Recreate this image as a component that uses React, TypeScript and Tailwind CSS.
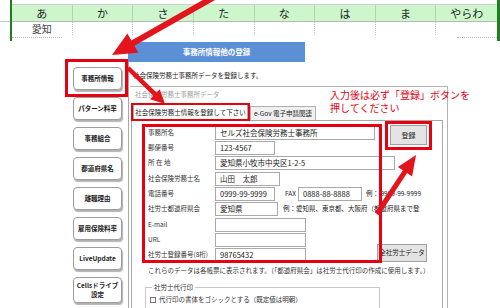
import React from 'react';

const KANA = ['あ', 'か', 'さ', 'た', 'な', 'は', 'ま', 'やらわ'];

const MENU = [
  '事務所情報',
  'パターン料率',
  '事務組合',
  '都道府県名',
  '離職理由',
  '雇用保険料率',
  'LiveUpdate',
];

// arrow polygon from tail to tip
const arrowPoints = (x1: number, y1: number, x2: number, y2: number, sw: number, hw: number, hl: number) => {
  const dx = x2 - x1;
  const dy = y2 - y1;
  const len = Math.hypot(dx, dy);
  const ux = dx / len;
  const uy = dy / len;
  const px = -uy;
  const py = ux;
  const bx = x2 - ux * hl;
  const by = y2 - uy * hl;
  const pts = [
    [x1 + (px * sw) / 2, y1 + (py * sw) / 2],
    [bx + (px * sw) / 2, by + (py * sw) / 2],
    [bx + (px * hw) / 2, by + (py * hw) / 2],
    [x2, y2],
    [bx - (px * hw) / 2, by - (py * hw) / 2],
    [bx - (px * sw) / 2, by - (py * sw) / 2],
    [x1 - (px * sw) / 2, y1 - (py * sw) / 2],
  ];
  return pts.map((p) => p.map((n) => n.toFixed(1)).join(',')).join(' ');
};

const Field: React.FC<{ w: string; value?: string }> = ({ w, value }) => (
  <div
    className={`${w} h-[14px] shrink-0 border border-[#a9a9a9] bg-white pl-[4px] text-[7.5px] leading-[12px] text-[#222] whitespace-nowrap overflow-hidden`}
  >
    {value}
  </div>
);

const Row: React.FC<{ label: string; h: string; children: React.ReactNode }> = ({ label, h, children }) => (
  <div className={`flex items-center ${h}`}>
    <span className="w-[67px] shrink-0 text-[6.5px] text-[#333] whitespace-nowrap">{label}</span>
    {children}
  </div>
);

const App: React.FC = () => {
  return (
    <div className="relative w-[500px] h-[308px] overflow-hidden bg-white font-['Noto_Sans_CJK_JP',sans-serif] text-[#222]">
      {/* sheet strip */}
      <div className="flex h-[41px]">
        <div className="w-[10px] shrink-0">
          <div className="h-[22px] border-b border-[#c8c8c8]" />
        </div>
        <div className="flex-1 border-l-[2px] border-r-[3px] border-[#1d7f1d]">
          <div className="h-[5px] border-b border-[#cfcfcf]" />
          <div className="grid grid-cols-8 h-[17px] bg-[#cdf6cd] border-b border-[#b9b9b9]">
            {KANA.map((k) => (
              <div
                key={k}
                className="flex items-center justify-center border-r border-[#b9cfb9] text-[11px] leading-none last:border-r-0"
              >
                {k}
              </div>
            ))}
          </div>
          <div className="grid grid-cols-8 h-[13px]">
            {KANA.map((k, i) => (
              <div
                key={k}
                className="w-full text-center border-r border-dotted border-[#c4c4c4] text-[10px] leading-[13px] text-[#444] last:border-r-0"
              >
                {i === 0 ? '愛知' : ''}
              </div>
            ))}
          </div>
          <div className="flex justify-between h-[3px]">
            <div className="w-[50px] border-b border-dotted border-[#b5b5b5]" />
            <div className="w-[40px] border-b border-dotted border-[#b5b5b5]" />
          </div>
        </div>
      </div>

      <div className="flex">
        {/* side menu */}
        <div className="w-[128px] shrink-0 flex flex-col items-end pr-[6px] pt-[26px] gap-[7px]">
          {MENU.map((m) => (
            <button
              key={m}
              className="w-[49px] h-[23px] rounded-[4px] border border-[#9d9d9d] bg-white shadow-[1px_2px_1px_rgba(0,0,0,0.3)] text-[6.5px] font-bold leading-none text-[#222] flex items-center justify-center whitespace-nowrap"
            >
              {m}
            </button>
          ))}
          <button className="w-[49px] h-[26px] rounded-[4px] border border-[#9d9d9d] bg-white shadow-[1px_2px_1px_rgba(0,0,0,0.3)] text-[6.5px] font-bold leading-[9px] text-[#222] flex flex-col items-center justify-center">
            <span>Cellsドライブ</span>
            <span>設定</span>
          </button>
        </div>

        {/* main */}
        <div className="flex-1 flex flex-col">
          <div className="mt-[1px] w-[177px] h-[20px] bg-[#5b8fd6] flex items-center justify-center text-[7.5px] font-bold text-white">
            事務所情報他の登録
          </div>
          <div className="border-l border-[#a8a8a8] h-[260px]">
            <div className="pt-[8px] pl-[4px] text-[6.5px] leading-[10px] text-[#222]">
              社会保険労務士事務所データを登録します。
            </div>
            <div className="mt-[6px] ml-[1px] w-[318px] h-[240px] border-t border-r border-[#b4b4b4]">
              <div className="pt-[3px] pl-[5px] text-[6.5px] leading-[9px] text-[#a0a0a0]">
                社会保険労務士事務所データ
              </div>
              {/* tabs */}
              <div className="mt-[4px] flex items-end h-[17px]">
                <div className="relative ml-[3px] w-[115px] h-[17px] -mb-px border border-b-0 border-[#a8a8a8] bg-white flex items-center justify-center text-[6.5px] whitespace-nowrap">
                  社会保険労務士情報を登録して下さい
                </div>
                <div className="ml-[2px] w-[66px] h-[14px] border border-b-0 border-[#b0b0b0] bg-[#f0f0f0] flex items-center justify-center text-[6.5px] whitespace-nowrap">
                  e-Gov 電子申請関連
                </div>
              </div>
              <div className="ml-[1px] w-[312px] h-[220px] border border-[#a8a8a8] bg-white pl-[16px] pt-[3px]">
                <Row label="事務所名" h="h-[17px]">
                  <Field w="w-[160px]" value="セルズ社会保険労務士事務所" />
                  <button className="self-start mt-[1px] ml-[15px] w-[37px] h-[20px] shrink-0 border border-[#a0a0a0] bg-[#e4e4e4] text-[7px] text-[#222]">
                    登録
                  </button>
                </Row>
                <Row label="郵便番号" h="h-[14px]">
                  <Field w="w-[60px]" value="123-4567" />
                </Row>
                <Row label="所 在 地" h="h-[16px]">
                  <Field w="w-[180px]" value="愛知県小牧市中央区1-2-5" />
                </Row>
                <Row label="社会保険労務士名" h="h-[15px]">
                  <Field w="w-[65px]" value="山田　太郎" />
                </Row>
                <Row label="電話番号" h="h-[15px]">
                  <Field w="w-[60px]" value="0999-99-9999" />
                  <span className="ml-[10px] w-[13px] shrink-0 text-[6.5px]">FAX</span>
                  <Field w="w-[64px]" value="0888-88-8888" />
                  <span className="ml-[4px] text-[6.5px] whitespace-nowrap">例：&nbsp;9999-99-9999</span>
                </Row>
                <Row label="社労士都道府県会" h="h-[16px]">
                  <Field w="w-[63px]" value="愛知県" />
                  <span className="ml-[5px] text-[6.5px] whitespace-nowrap">例：愛知県、東京都、大阪府（都道府県まで登</span>
                </Row>
                <Row label="E-mail" h="h-[15px]">
                  <Field w="w-[91px]" />
                </Row>
                <Row label="URL" h="h-[15px]">
                  <Field w="w-[91px]" />
                </Row>
                <Row label="社労士登録番号(8桁)" h="h-[15px]">
                  <Field w="w-[91px]" value="98765432" />
                  <button className="self-end ml-auto mr-[15px] w-[50px] h-[18px] shrink-0 border border-[#a0a0a0] bg-[#e4e4e4] text-[6.5px] text-[#222] whitespace-nowrap">
                    全社労士データ
                  </button>
                </Row>
                <div className="mt-[4px] text-[6.5px] leading-[9px] text-[#333] whitespace-nowrap">
                  これらのデータは各帳票に表示されます。（「都道府県会」は社労士代行印の作成に使用します。）
                </div>
                <fieldset className="mt-[8px] -ml-[3px] w-[235px] h-[40px] border border-[#c8c8c8] pl-[4px]">
                  <legend className="ml-[2px] px-[2px] text-[6.5px] leading-[9px] text-[#333]">社労士代行印</legend>
                  <div className="flex items-center gap-[3px] pt-[3px]">
                    <span className="w-[6px] h-[6px] border border-[#777] bg-white" />
                    <span className="text-[6.5px] leading-[9px] text-[#333]">代行印の書体をゴシックとする（既定値は明朝）</span>
                  </div>
                </fieldset>
              </div>
            </div>
          </div>
        </div>
      </div>

      {/* annotation overlays */}
      <div className="absolute z-20 left-[65px] top-[59px] w-[63px] h-[38px] border-[3px] border-[#e60012]" />
      <div className="absolute z-20 left-[131px] top-[103px] w-[119px] h-[18px] border-[2px] border-[#e60012]" />
      <div className="absolute z-20 left-[142px] top-[124px] w-[240px] h-[139px] border-[3px] border-[#e60012]" />
      <div className="absolute z-20 left-[385px] top-[121px] w-[47px] h-[29px] border-[3px] border-[#e60012]" />
      <div className="absolute z-20 left-[330px] top-[88px] text-[10px] leading-[13px] text-[#e60012] whitespace-nowrap">
        <div>入力後は必ず「登録」ボタンを</div>
        <div>押してください</div>
      </div>
      <svg className="absolute z-30 left-0 top-0 pointer-events-none" width="500" height="308" viewBox="0 0 500 308">
        <polygon points={arrowPoints(216, -4, 112, 55, 6, 22, 24)} fill="#e3141b" />
        <polygon points={arrowPoints(377, 214, 416, 155, 5, 17, 20)} fill="#e3141b" />
      </svg>
      <svg className="absolute z-30 left-[124px] top-[64px] pointer-events-none" width="46" height="44" viewBox="0 0 46 44">
        <polygon points={arrowPoints(4, 4, 41, 40, 4.5, 14, 14)} fill="#e3141b" />
      </svg>
    </div>
  );
};

export default App;
